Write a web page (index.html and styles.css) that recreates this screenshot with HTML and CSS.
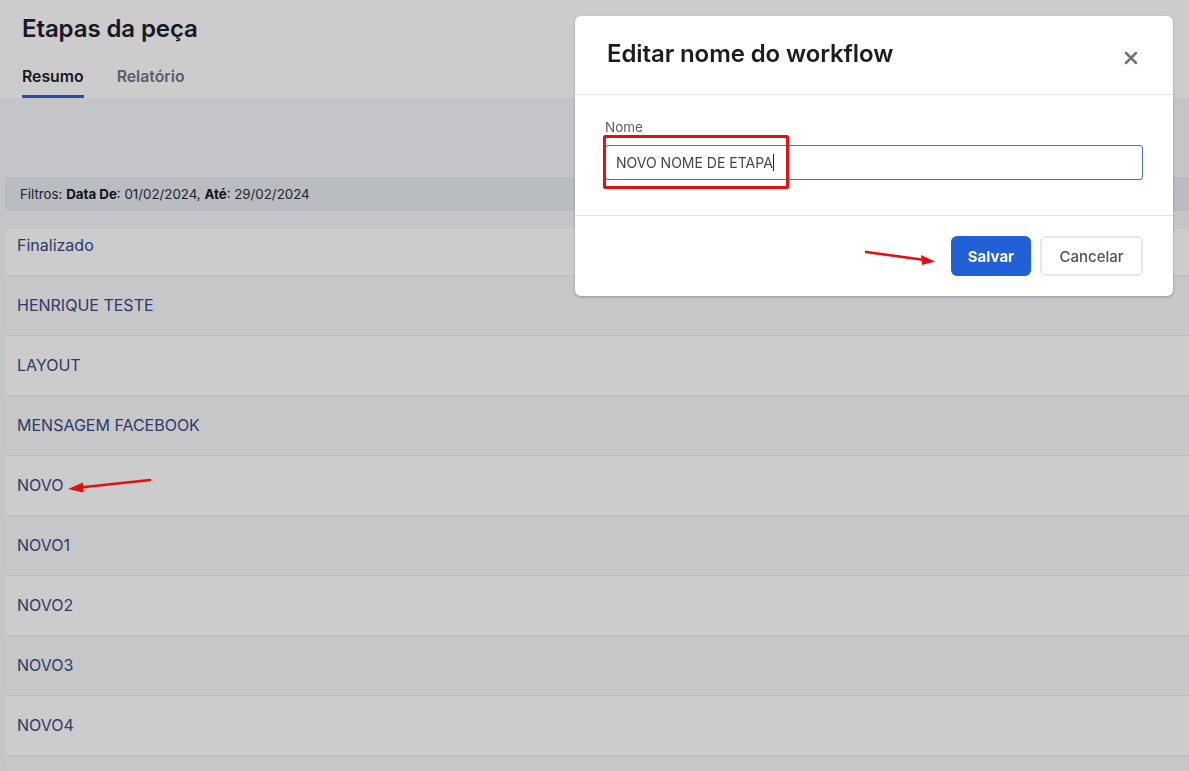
FILE: index.html
```html
<!DOCTYPE html>
<html lang="pt-BR">
<head>
<meta charset="utf-8">
<title>Etapas da peça</title>
<link rel="stylesheet" href="styles.css">
</head>
<body>
<div class="page">
  <header class="header">
    <h1 class="title">Etapas da peça</h1>
    <nav class="tabs">
      <span class="tab active">Resumo</span>
      <span class="tab">Relatório</span>
    </nav>
  </header>
  <main class="content">
    <div class="filters">Filtros: <b>Data De</b>: 01/02/2024, <b>Até</b>: 29/02/2024</div>
    <ul class="list">
      <li class="row first">Finalizado</li>
      <li class="row alt">HENRIQUE TESTE</li>
      <li class="row">LAYOUT</li>
      <li class="row alt">MENSAGEM FACEBOOK</li>
      <li class="row">NOVO</li>
      <li class="row alt">NOVO1</li>
      <li class="row">NOVO2</li>
      <li class="row alt">NOVO3</li>
      <li class="row">NOVO4</li>
      <li class="row alt"></li>
    </ul>
  </main>
</div>

<div class="backdrop"></div>

<div class="modal">
  <div class="modal-header">
    <h2 class="modal-title">Editar nome do workflow</h2>
    <button class="close" aria-label="Fechar">
      <svg width="16" height="16" viewBox="0 0 16 16"><path d="M3 3 L13 13 M13 3 L3 13" stroke="#6b7280" stroke-width="2.5" stroke-linecap="round"/></svg>
    </button>
  </div>
  <div class="modal-body">
    <label class="label">Nome</label>
    <div class="input"><span class="value">NOVO NOME DE ETAPA</span></div>
  </div>
  <div class="modal-footer">
    <button class="btn primary">Salvar</button>
    <button class="btn secondary">Cancelar</button>
  </div>
</div>

<div class="mark-box"></div>
<svg class="arrow arrow-save" width="80" height="20" viewBox="0 0 80 20">
  <path d="M1 3 L60 11" stroke="#e3100f" stroke-width="2.6" stroke-linecap="round"/>
  <path d="M70 12.5 L56 6 L57 16 Z" fill="#e3100f"/>
</svg>
<svg class="arrow arrow-novo" width="90" height="20" viewBox="0 0 90 20">
  <path d="M84 2 L14 9.5" stroke="#e3100f" stroke-width="2.6" stroke-linecap="round"/>
  <path d="M2 11 L17 4.5 L17 14.5 Z" fill="#e3100f"/>
</svg>
</body>
</html>
```

FILE: styles.css
```css
* { box-sizing: border-box; }
html, body { margin: 0; padding: 0; }
body {
  font-family: Inter, "Noto Sans", "Liberation Sans", sans-serif;
  background: #f5f7fb;
  height: 771px;
  overflow: hidden;
}
.page { display: flex; flex-direction: column; }
.header {
  background: #ffffff;
  height: 98px;
  padding: 13px 22px 0;
  display: flex;
  flex-direction: column;
}
.title {
  margin: 0;
  font-size: 24px;
  font-weight: 600;
  color: #202030;
  line-height: 32px;
  letter-spacing: -0.1px;
}
.tabs {
  display: flex;
  gap: 33px;
  margin-top: 22px;
}
.tab {
  font-size: 15.8px;
  font-weight: 600;
  color: #6f7683;
  line-height: 20px;
  padding-bottom: 8px;
  border-bottom: 3px solid transparent;
}
.tab.active {
  color: #1f2230;
  border-bottom-color: #3461cf;
  border-radius: 3px 3px 0 0;
}
.content {
  background: #f5f7fb;
  padding: 79px 0 0 5px;
}
.filters {
  height: 34px;
  background: #e8ebf1;
  border-radius: 4px 0 0 4px;
  font-size: 13.3px;
  color: #2a2d36;
  line-height: 34px;
  padding-left: 15px;
}
.filters b { font-weight: 700; color: #15171e; }
.list {
  list-style: none;
  margin: 18px 0 0;
  padding: 0;
}
.row {
  height: 60px;
  display: flex;
  align-items: center;
  padding-left: 12px;
  padding-bottom: 1px;
  font-size: 16px;
  color: #384a85;
  background: #ffffff;
  border-bottom: 1px solid #eaedf2;
}
.row.alt { background: #f8f9fc; }
.row.first {
  height: 47px;
  align-items: flex-start;
  padding-top: 6px;
}
.backdrop {
  position: fixed;
  inset: 0;
  background: rgba(0, 0, 0, 0.2);
}
.modal {
  position: fixed;
  left: 575px;
  top: 16px;
  width: 598px;
  height: 280px;
  background: #ffffff;
  border-radius: 6px;
  box-shadow: 0 1px 3px rgba(0,0,0,0.25);
  display: flex;
  flex-direction: column;
  font-family: Inter, "Liberation Sans", sans-serif;
}
.modal-header {
  height: 79px;
  border-bottom: 1px solid #e3e5e8;
  display: flex;
  align-items: center;
  justify-content: space-between;
  padding: 0 32px 0 32px;
}
.modal-title {
  margin: 0;
  font-size: 24px;
  font-weight: 600;
  color: #1c1c24;
  margin-top: -4px;
  letter-spacing: -0.1px;
}
.close {
  border: 0;
  background: none;
  padding: 0;
  width: 16px;
  height: 16px;
  margin-right: 2px;
  margin-top: 6px;
  display: flex;
}
.modal-body {
  height: 121px;
  padding: 24px 30px 0;
  border-bottom: 1px solid #e3e5e8;
  display: flex;
  flex-direction: column;
}
.label {
  font-size: 13.5px;
  color: #5b5e66;
  line-height: 16px;
  margin-bottom: 10px;
}
.input {
  height: 35px;
  border: 1px solid #4a72c4;
  border-radius: 3px;
  display: flex;
  align-items: center;
  padding-left: 10px;
}
.value {
  font-size: 14px;
  color: #43464f;
  border-right: 1px solid #222;
  line-height: 17px;
}
.modal-footer {
  flex: 1;
  display: flex;
  justify-content: flex-end;
  align-items: center;
  gap: 9px;
  padding-right: 30px;
}
.btn {
  height: 40px;
  border-radius: 6px;
  font-family: Inter, "Liberation Sans", sans-serif;
  font-size: 15px;
}
.btn.primary {
  width: 80px;
  background: #2260d8;
  border: 0;
  color: #ffffff;
  font-weight: 700;
}
.btn.secondary {
  width: 103px;
  background: #ffffff;
  border: 2px solid #e6e8ec;
  color: #4b5160;
  font-weight: 500;
}
.mark-box {
  position: fixed;
  left: 603px;
  top: 135px;
  width: 186px;
  height: 54px;
  border: 3px solid #e3100f;
  border-radius: 2px;
}
.arrow { position: fixed; }
.arrow-save { left: 865px; top: 249px; }
.arrow-novo { left: 66px; top: 478px; }
```
